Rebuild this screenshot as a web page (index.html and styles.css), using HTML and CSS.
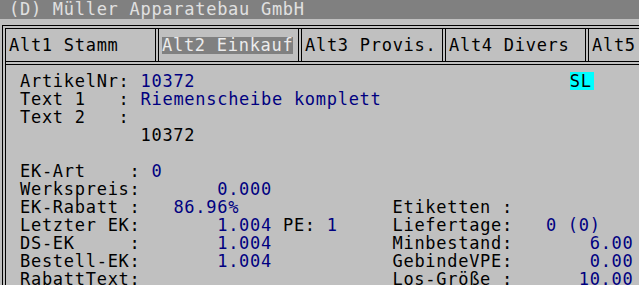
FILE: index.html
```html
<!DOCTYPE html>
<html lang="de">
<head>
  <meta charset="UTF-8">
  <title>Artikel 10372</title>
  <link rel="stylesheet" href="styles.css">
</head>
<body>
  <div class="titlebar">(D) Müller Apparatebau GmbH</div>
  <div class="frame">
    <div class="tabs">
      <div class="tab tab-stamm">Alt1 Stamm</div>
      <div class="tab tab-einkauf"><span class="active">Alt2 Einkauf</span></div>
      <div class="tab tab-provis">Alt3 Provis.</div>
      <div class="tab tab-divers">Alt4 Divers</div>
      <div class="tab tab-more">Alt5</div>
    </div>
    <div class="panel">
      <div class="row">ArtikelNr: <span class="val">10372</span>                                  <span class="flag">SL</span></div>
      <div class="row">Text 1   : <span class="val">Riemenscheibe komplett</span></div>
      <div class="row">Text 2   :</div>
      <div class="row">           10372</div>
      <div class="row blank"></div>
      <div class="row">EK-Art    : <span class="val">0</span></div>
      <div class="row">Werkspreis:       <span class="val">0.000</span></div>
      <div class="row">EK-Rabatt :   <span class="val">86.96%</span>              Etiketten :</div>
      <div class="row">Letzter EK:       <span class="val">1.004</span> PE: <span class="val">1</span>     Liefertage:   <span class="val">0 (0)</span></div>
      <div class="row">DS-EK     :       <span class="val">1.004</span>           Minbestand:       <span class="val">6.00</span></div>
      <div class="row">Bestell-EK:       <span class="val">1.004</span>           GebindeVPE:       <span class="val">0.00</span></div>
      <div class="row">RabattText:                       Los-Größe :      <span class="val">10.00</span></div>
    </div>
  </div>
</body>
</html>
```

FILE: styles.css
```css
* {
  box-sizing: border-box;
}
html, body {
  margin: 0;
  overflow: hidden;
}
body {
  background-color: #c0c0c0;
  color: #000;
  font-family: "DejaVu Sans Mono", monospace;
  font-size: 17px;
  letter-spacing: 0.72px;
  line-height: 18px;
}
.titlebar {
  height: 19px;
  padding-left: 9px;
  background-color: #808080;
  color: #e0e0e0;
  white-space: pre;
}
.frame {
  margin: 6px 0 0 2px;
  border-top: 4px double #000;
  border-left: 4px double #000;
}
.tabs {
  display: flex;
  border-bottom: 4px double #000;
}
.tab {
  padding: 7px 0 7px 3px;
  white-space: pre;
  border-left: 4px double #000;
}
.tab-stamm {
  width: 149px;
  border-left: none;
}
.tab-einkauf {
  width: 143px;
}
.tab-provis {
  width: 144px;
}
.tab-divers {
  width: 143px;
}
.tab-more {
  flex: 1;
}
.tab .active {
  display: inline-block;
  line-height: 17px;
  background-color: #808080;
  color: #ececec;
}
.panel {
  padding: 7px 0 0 14px;
}
.row {
  height: 18px;
  white-space: pre;
}
.val {
  color: #000080;
}
.flag {
  display: inline-block;
  margin-left: 2px;
  padding-right: 2px;
  line-height: 18px;
  background-color: #00ffff;
}
```
